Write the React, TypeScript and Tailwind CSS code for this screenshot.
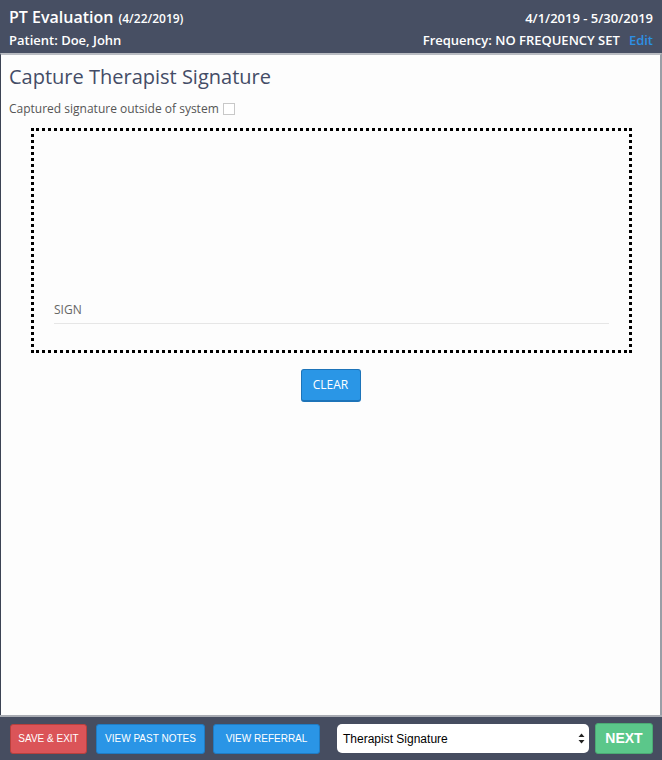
import React from "react";

const FooterButton = ({
  label,
  className,
}: {
  label: string;
  className: string;
}) => (
  <button
    className={`h-[30px] rounded-[3px] border text-[10px] uppercase text-white ${className}`}
    style={{ fontFamily: "'Liberation Sans', Arial, sans-serif" }}
  >
    {label}
  </button>
);

const App = () => {
  return (
    <div
      className="flex h-[760px] w-[662px] flex-col overflow-hidden bg-[#3c4354]"
      style={{ fontFamily: "'Open Sans', sans-serif" }}
    >
      {/* header */}
      <div className="flex h-[53px] flex-col justify-between bg-[#474f63] px-[9px] pb-[3px] pt-[5px] text-white">
        <div className="flex items-baseline justify-between">
          <div className="flex items-baseline gap-[5px]">
            <span className="text-[16px] font-semibold">PT Evaluation</span>
            <span className="text-[12px] font-semibold">(4/22/2019)</span>
          </div>
          <span className="text-[13px] font-semibold">4/1/2019 - 5/30/2019</span>
        </div>
        <div className="flex items-baseline justify-between text-[13px] font-semibold">
          <span>Patient: Doe, John</span>
          <span>
            Frequency: NO FREQUENCY SET
            <span className="ml-[9px] text-[#2d8fe3]">Edit</span>
          </span>
        </div>
      </div>

      {/* content */}
      <div className="flex flex-1 flex-col border-t-2 border-l border-r-2 border-t-[#b9bcc2] border-l-[#3c4354] border-r-[#9a9ea6] bg-[#fdfdfd]">
        <h1 className="ml-[8px] mt-[8px] text-[20px] leading-[28px] text-[#444c66]">
          Capture Therapist Signature
        </h1>
        <div className="ml-[8px] mt-[9px] flex items-center gap-[4px] text-[12px] text-[#555]">
          <span>Captured signature outside of system</span>
          <span className="inline-block h-[12px] w-[12px] border border-[#c8c8c8] bg-white" />
        </div>

        <div className="ml-[30px] mt-[10px] flex h-[225px] w-[601px] flex-col justify-end border-[3px] border-dotted border-black px-[20px] pb-[26px]">
          <span className="text-[12px] text-[#666]">SIGN</span>
          <div className="mt-[4px] h-px bg-[#e6e6e6]" />
        </div>

        <div className="mt-[16px] flex justify-center">
          <button className="h-[33px] w-[60px] rounded-[3px] border border-b-2 border-[#1d74b9] bg-[#2a96e6] text-[12px] text-white">
            CLEAR
          </button>
        </div>
      </div>

      {/* footer */}
      <div className="flex h-[45px] items-center border-t-2 border-[#a9acb3] bg-[#464d60] pl-[10px] pr-[9px]">
        <FooterButton
          label="Save & Exit"
          className="w-[77px] border-[#b8403d] bg-[#db5458]"
        />
        <FooterButton
          label="View Past Notes"
          className="ml-[9px] w-[109px] border-[#1f7cc4] bg-[#2a95e6]"
        />
        <FooterButton
          label="View Referral"
          className="ml-[8px] w-[107px] border-[#1f7cc4] bg-[#2a95e6]"
        />
        <div
          className="ml-[17px] flex h-[29px] w-[252px] items-center justify-between rounded-[5px] bg-white pl-[6px] pr-[4px] text-[12px] text-black"
          style={{ fontFamily: "'Liberation Sans', Arial, sans-serif" }}
        >
          <span>Therapist Signature</span>
          <svg width="7" height="11" viewBox="0 0 7 11">
            <path d="M3.5 0.5 L6.5 4 H0.5 Z" fill="#222" />
            <path d="M3.5 10.5 L6.5 7 H0.5 Z" fill="#222" />
          </svg>
        </div>
        <button
          className="ml-auto h-[31px] w-[58px] rounded-[3px] border border-[#4bab74] bg-[#5bc78a] text-[14px] font-bold text-white"
          style={{ fontFamily: "'Liberation Sans', Arial, sans-serif" }}
        >
          NEXT
        </button>
      </div>
    </div>
  );
};

export default App;
